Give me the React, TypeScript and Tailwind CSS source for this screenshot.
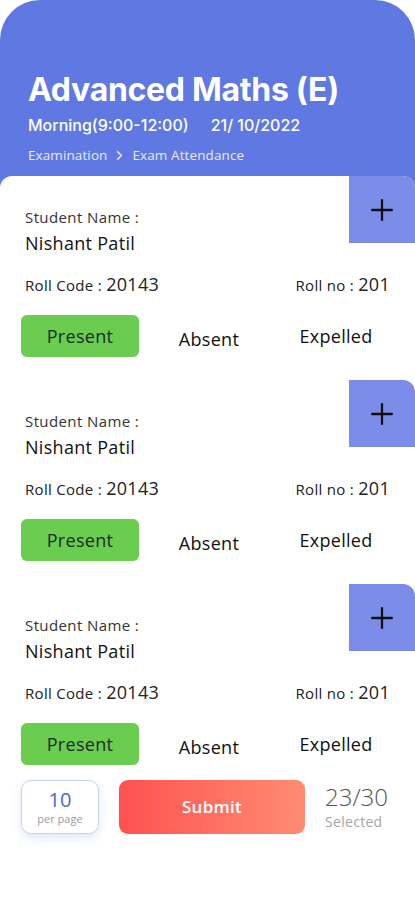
import { Plus, ChevronRight } from "lucide-react";

const students = [
  { name: "Nishant Patil", code: "20143", roll: "201" },
  { name: "Nishant Patil", code: "20143", roll: "201" },
  { name: "Nishant Patil", code: "20143", roll: "201" },
];

function StudentCard({ name, code, roll }: { name: string; code: string; roll: string }) {
  return (
    <div className="flex flex-col">
      <div className="flex items-start justify-between">
        <div className="pl-[25px] pt-[31px]">
          <div className="text-[15px] leading-[20px] tracking-[0.4px] text-[#333]">Student Name :</div>
          <div className="mt-[4px] text-[18px] leading-[24px] tracking-[0.3px] text-[#111]">{name}</div>
        </div>
        <button className="flex h-[67px] w-[66px] items-center justify-center rounded-tr-[12px] bg-[#7b8de9] text-[#111]">
          <Plus size={34} strokeWidth={1.6} />
        </button>
      </div>
      <div className="mt-[17px] flex h-[24px] items-center justify-between pl-[25px] pr-[25px] leading-[24px] tracking-[0.3px]">
        <div className="text-[#222]">
          <span className="text-[15px]">Roll Code : </span>
          <span className="text-[18px]">{code}</span>
        </div>
        <div className="text-[#222]">
          <span className="text-[15px]">Roll no : </span>
          <span className="text-[18px]">{roll}</span>
        </div>
      </div>
      <div className="mt-[19px] flex h-[42px] items-center pl-[21px] leading-[24px] tracking-[0.3px]">
        <button className="h-[42px] w-[118px] rounded-[6px] bg-[#6bcd4f] text-[18px] font-medium text-[#1b2a2b]">
          Present
        </button>
        <span className="mt-[5px] w-[140px] text-center text-[18px] font-medium text-[#111]">Absent</span>
        <span className="w-[114px] text-center text-[18px] font-medium text-[#111]">Expelled</span>
      </div>
    </div>
  );
}

export default function App() {
  return (
    <div className="h-[900px] w-full overflow-hidden bg-white font-['Open_Sans',sans-serif]">
      <div className="rounded-t-[40px] bg-[#6078e1]">
        <header className="px-[28px] pt-[70px] pb-[12px] text-white">
          <h1 className="font-['Inter',sans-serif] text-[32px] font-bold leading-[40px] tracking-[-0.3px]">
            Advanced Maths (E)
          </h1>
          <div className="mt-[4px] flex gap-[22px] font-['Inter',sans-serif] text-[16px] font-medium leading-[22px]">
            <span>Morning(9:00-12:00)</span>
            <span>21/ 10/2022</span>
          </div>
          <div className="mt-[10px] flex items-center gap-[5px] text-[13.5px] leading-[18px] tracking-[0.1px] text-white/85">
            <span>Examination</span>
            <ChevronRight size={15} strokeWidth={2.5} />
            <span>Exam Attendance</span>
          </div>
        </header>
        <main className="flex min-h-[724px] flex-col rounded-t-[12px] bg-white">
          <div className="flex flex-col gap-[23px]">
            {students.map((s, i) => (
              <StudentCard key={i} {...s} />
            ))}
          </div>
          <div className="mt-[15px] flex items-center pl-[21px]">
            <div className="flex h-[54px] w-[78px] flex-col items-center justify-center rounded-[10px] border border-[#c9d2f5] bg-white shadow-[0_4px_8px_rgba(96,120,225,0.18)]">
              <span className="text-[20px] leading-[24px] text-[#4a66d6]">10</span>
              <span className="text-[11px] leading-[14px] text-[#9a9a9a]">per page</span>
            </div>
            <button className="ml-[20px] h-[54px] w-[186px] rounded-[9px] bg-gradient-to-r from-[#ff5050] to-[#ff8a72] text-[17px] font-semibold tracking-[0.3px] text-white">
              Submit
            </button>
            <div className="ml-[20px] flex flex-col items-start">
              <span className="text-[24px] font-light leading-[26px] text-[#555]">23/30</span>
              <span className="mt-[3px] text-[14px] leading-[18px] tracking-[0.3px] text-[#a5a5a5]">Selected</span>
            </div>
          </div>
        </main>
      </div>
    </div>
  );
}
